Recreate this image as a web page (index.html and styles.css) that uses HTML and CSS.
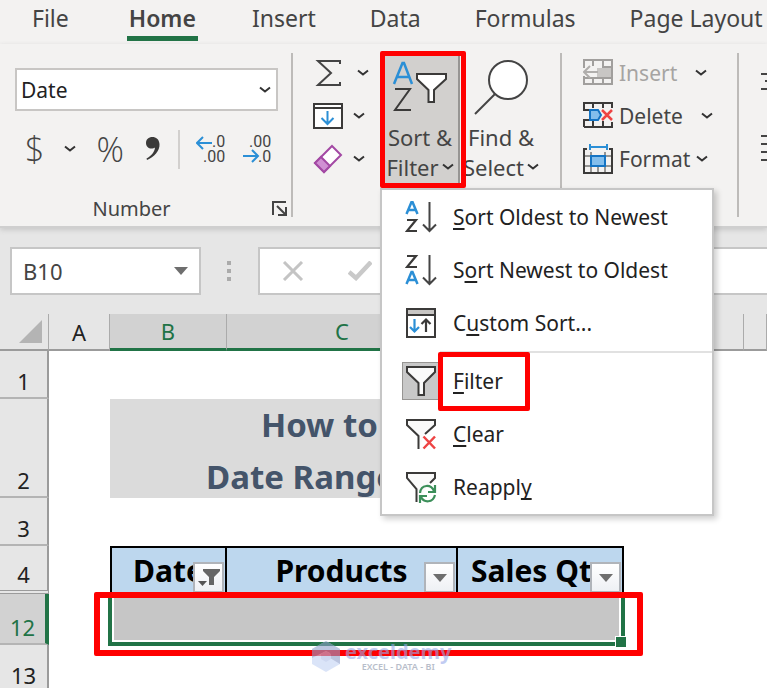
FILE: index.html
```html
<!DOCTYPE html>
<html lang="en">

<head>
    <meta charset="UTF-8">
    <meta name="viewport" content="width=device-width, initial-scale=1.0">
    <title>Date Range Filter</title>
    <link rel="stylesheet" href="styles.css">
</head>

<body>
    <svg class="defs" aria-hidden="true">
        <symbol id="chevron" viewBox="0 0 12 8">
            <path d="M1 1.5 L6 5.5 L11 1.5" fill="none" stroke="#333" stroke-width="2" />
        </symbol>
        <symbol id="caret" viewBox="0 0 14 8">
            <path d="M0 0 H14 L7 8 Z" fill="#6e6e6e" />
        </symbol>
    </svg>

    <nav class="tabs">
        <a href="#" class="file">File</a>
        <a href="#" class="active">Home</a>
        <a href="#">Insert</a>
        <a href="#">Data</a>
        <a href="#">Formulas</a>
        <a href="#">Page Layout</a>
    </nav>

    <div class="ribbon">
        <section class="group number">
            <div class="format-box">
                <select aria-label="Number format">
                    <option>Date</option>
                </select>
                <svg class="chevron"><use href="#chevron" /></svg>
            </div>
            <div class="number-tools">
                <div class="number-style">
                    <button class="currency" aria-label="Currency">$</button>
                    <button aria-label="More currencies"><svg class="chevron"><use href="#chevron" /></svg></button>
                    <button class="percent" aria-label="Percent">%</button>
                    <button aria-label="Comma style">
                        <svg width="18" height="26" viewBox="0 0 18 26">
                            <path d="M3 24 C10 21 16 15 15.500 8 C15 3 12 1 8.500 1 C4.500 1 2 3.500 2 7 C2 10.500 4.500 12.500 7.500 12.500 C9 12.500 10 12.200 11 11.500 C10.500 16 7.500 20 2.500 22.500 Z" fill="#3b3a39" />
                        </svg>
                    </button>
                </div>
                <span class="divider"></span>
                <button aria-label="Increase decimal">
                    <svg width="30" height="32" viewBox="0 0 30 32">
                        <path d="M1 10 H16 M7 4 L1 10 L7 16" fill="none" stroke="#2b8fd6" stroke-width="2" />
                        <text x="16" y="14" class="digits">.0</text>
                        <text x="7" y="29" class="digits">.00</text>
                    </svg>
                </button>
                <button aria-label="Decrease decimal">
                    <svg width="30" height="32" viewBox="0 0 30 32">
                        <path d="M1 23 H16 M10 17 L16 23 L10 29" fill="none" stroke="#2b8fd6" stroke-width="2" />
                        <text x="7" y="14" class="digits">.00</text>
                        <text x="16" y="29" class="digits">.0</text>
                    </svg>
                </button>
            </div>
            <footer class="group-name">
                <span>Number</span>
                <button aria-label="Number settings">
                    <svg width="16" height="16" viewBox="0 0 16 16">
                        <path d="M1 14 V1 H14 M5 5 L13 13 M14 6 V14 H6" fill="none" stroke="#444" stroke-width="2" />
                    </svg>
                </button>
            </footer>
        </section>

        <section class="group editing">
            <div class="edit-tools">
                <button aria-label="AutoSum">
                    <svg width="30" height="28" viewBox="0 0 30 28">
                        <path d="M27 5 V2 H5 L18 14 L5 26 H27 V23" fill="none" stroke="#444" stroke-width="2" />
                    </svg>
                    <svg class="chevron sum-chevron"><use href="#chevron" /></svg>
                </button>
                <button aria-label="Fill">
                    <svg width="30" height="28" viewBox="0 0 30 28">
                        <path d="M1 2 H29 V26 H1 Z" fill="#fff" stroke="#3b3a39" stroke-width="2" />
                        <path d="M1 6 H29" stroke="#3b3a39" stroke-width="2" />
                        <path d="M14.500 9 V22 M8.500 16 L14.500 22 L20.500 16" fill="none" stroke="#2b8fd6" stroke-width="2" />
                    </svg>
                    <svg class="chevron"><use href="#chevron" /></svg>
                </button>
                <button aria-label="Clear contents">
                    <svg width="30" height="30" viewBox="0 0 30 30">
                        <path d="M19 2 L28 11 L11 28 L2 19 Z" fill="#fff" stroke="#a349a4" stroke-width="2" />
                        <path d="M8 13 L17 22 L11 28 L2 19 Z" fill="#d090d3" stroke="#a349a4" stroke-width="2" />
                    </svg>
                    <svg class="chevron"><use href="#chevron" /></svg>
                </button>
            </div>

            <div class="dropdown">
                <button class="big-button open">
                    <svg width="56" height="62" viewBox="0 0 56 62">
                        <path d="M2 24 L10.500 3 L12 3 L20 24 M5 17 H17" fill="none" stroke="#2b8fd6" stroke-width="2.500" />
                        <path d="M3 29 H18 L3 50 H19" fill="none" stroke="#3b3a39" stroke-width="2" />
                        <path d="M25 14 H54 V19 L42 30 V42 H36.500 V30 L25 19 Z" fill="#fff" stroke="#3b3a39" stroke-width="2" />
                    </svg>
                    <span>Sort &amp;</span>
                    <span>Filter <svg class="chevron"><use href="#chevron" /></svg></span>
                </button>

                <div class="menu" role="menu">
                    <button role="menuitem">
                        <span class="menu-icon">
                            <svg width="32" height="32" viewBox="0 0 32 32">
                                <path d="M1.500 13 L6.500 1 H7.500 L12.500 13 M3.500 9 H10.500" fill="none" stroke="#2b8fd6" stroke-width="2.500" />
                                <path d="M2 19 H11 L2 30 H12" fill="none" stroke="#3b3a39" stroke-width="2.200" />
                                <path d="M24.500 1 V30 M18 23.500 L24.500 30 L31 23.500" fill="none" stroke="#444" stroke-width="2" />
                            </svg>
                        </span>
                        <span><u>S</u>ort Oldest to Newest</span>
                    </button>
                    <button role="menuitem">
                        <span class="menu-icon">
                            <svg width="32" height="32" viewBox="0 0 32 32">
                                <path d="M2 2 H11 L2 13 H12" fill="none" stroke="#3b3a39" stroke-width="2.200" />
                                <path d="M1.500 30 L6.500 18 H7.500 L12.500 30 M3.500 26 H10.500" fill="none" stroke="#2b8fd6" stroke-width="2.500" />
                                <path d="M24.500 1 V30 M18 23.500 L24.500 30 L31 23.500" fill="none" stroke="#444" stroke-width="2" />
                            </svg>
                        </span>
                        <span>S<u>o</u>rt Newest to Oldest</span>
                    </button>
                    <button role="menuitem">
                        <span class="menu-icon">
                            <svg width="32" height="32" viewBox="0 0 32 32">
                                <path d="M2 2 H30 V30 H2 Z" fill="#fff" stroke="#3b3a39" stroke-width="2" />
                                <path d="M3 3 H29 V7 H3 Z" fill="#c8c6c4" />
                                <path d="M2 8 H30" stroke="#3b3a39" stroke-width="2" />
                                <path d="M9.500 12 V24 M5 20 L9.500 24.500 L14 20" fill="none" stroke="#2b8fd6" stroke-width="2.200" />
                                <path d="M21 25 V13 M16.500 17 L21 12.500 L25.500 17" fill="none" stroke="#3b3a39" stroke-width="2.200" />
                            </svg>
                        </span>
                        <span>C<u>u</u>stom Sort...</span>
                    </button>
                    <hr>
                    <button role="menuitem">
                        <span class="menu-icon checked">
                            <svg width="32" height="32" viewBox="0 0 32 32">
                                <path d="M2 2 H30 V7 L19 18 V30 H13.500 V18 L2 7 Z" fill="#fafafa" stroke="#3b3a39" stroke-width="2" />
                            </svg>
                        </span>
                        <span class="marked"><u>F</u>ilter</span>
                    </button>
                    <button role="menuitem">
                        <span class="menu-icon">
                            <svg width="32" height="32" viewBox="0 0 32 32">
                                <path d="M13.500 31 V18 L2 7 V2 H30 V7 L20 16" fill="#fafafa" stroke="#3b3a39" stroke-width="2" />
                                <path d="M18.500 18.500 L30 30.500 M30 18.500 L18.500 30.500" stroke="#ee4444" stroke-width="2.500" />
                            </svg>
                        </span>
                        <span><u>C</u>lear</span>
                    </button>
                    <button role="menuitem">
                        <span class="menu-icon">
                            <svg width="32" height="32" viewBox="0 0 32 32">
                                <path d="M11.500 31 V18 L2 7 V2 H30 V7 L25 12" fill="#fafafa" stroke="#3b3a39" stroke-width="2" />
                                <path d="M15 22 C16 13 26 13 29 20 M30 14 V21 H23 M30 24 C28 32 19 32 16 26 M15 32 V25 H22" fill="none" stroke="#3c8f5a" stroke-width="2.200" />
                            </svg>
                        </span>
                        <span>Reappl<u>y</u></span>
                    </button>
                </div>
            </div>

            <button class="big-button find">
                <svg width="56" height="62" viewBox="0 0 56 62">
                    <circle cx="35" cy="20" r="19" fill="#fff" stroke="#444" stroke-width="2" />
                    <path d="M22 34 L2 54" stroke="#444" stroke-width="2" />
                </svg>
                <span>Find &amp;</span>
                <span>Select <svg class="chevron"><use href="#chevron" /></svg></span>
            </button>
        </section>

        <section class="group cells">
            <button class="disabled">
                <svg width="30" height="30" viewBox="0 0 30 30">
                    <path d="M1 10 V2 H29 V26 H1 V18 M10 2 V8 M20 2 V26 M10 20 V26 M20 9 H29 M1 20 H29" fill="none" stroke="#a19f9d" stroke-width="2" />
                    <path d="M14 10 H28 V19 H14 Z" fill="#c8c6c4" />
                    <path d="M1 14 H15 M7 8 L1 14 L7 20" fill="none" stroke="#b0aeac" stroke-width="2" />
                </svg>
                <span>Insert</span>
                <svg class="chevron"><use href="#chevron" /></svg>
            </button>
            <button>
                <svg width="30" height="30" viewBox="0 0 30 30">
                    <path d="M29 7 V2 H1 V9 H7 M10 2 V7 M20 2 V7 M1 26 V19 H7 M1 26 H29 V21 M10 20 V26 M20 20 V26" fill="none" stroke="#3b3a39" stroke-width="2" />
                    <path d="M7 9 H15 L18 14 L15 19 H7 Z" fill="#83beec" stroke="#1474c4" stroke-width="2" />
                    <path d="M19 9 L29 19 M29 9 L19 19" stroke="#ee4444" stroke-width="2.500" />
                </svg>
                <span>Delete</span>
                <svg class="chevron"><use href="#chevron" /></svg>
            </button>
            <button class="format">
                <svg width="30" height="30" viewBox="0 0 30 30">
                    <path d="M4 5 H1 V29 H29 V5 H26" fill="none" stroke="#3b3a39" stroke-width="2" />
                    <path d="M8 8 V29 M22 8 V29 M15 23 V29 M2 12 H28 M2 22 H28" fill="none" stroke="#3b3a39" stroke-width="1" />
                    <path d="M8 12 H22 V22 H8 Z" fill="#83beec" stroke="#1474c4" stroke-width="2" />
                    <path d="M7 3 H24 M7 0 V6 M24 0 V6" stroke="#2b8fd6" stroke-width="2" />
                </svg>
                <span>Format</span>
                <svg class="chevron"><use href="#chevron" /></svg>
            </button>
        </section>

        <section class="group align">
            <button aria-label="Wrap">
                <svg width="20" height="30" viewBox="0 0 20 30"><path d="M0 7 H20 M4 14 H20 M0 22 H20" stroke="#444" stroke-width="2" /></svg>
            </button>
            <button aria-label="Align">
                <svg width="20" height="30" viewBox="0 0 20 30"><path d="M0 3 H20 M0 11 H20 M0 19 H20 M0 27 H20" stroke="#444" stroke-width="2" /></svg>
            </button>
        </section>
    </div>

    <div class="formula-bar">
        <div class="name-box">
            <input type="text" value="B10" aria-label="Name box">
            <svg width="14" height="8"><use href="#caret" /></svg>
        </div>
        <svg class="dots" width="4" height="20" viewBox="0 0 4 20">
            <path d="M0 0 H4 V4 H0 Z M0 8 H4 V12 H0 Z M0 16 H4 V20 H0 Z" fill="#ababab" />
        </svg>
        <div class="entry">
            <button aria-label="Cancel">
                <svg width="22" height="20" viewBox="0 0 22 20"><path d="M2 1 L20 19 M20 1 L2 19" stroke="#c4c4c4" stroke-width="3" /></svg>
            </button>
            <button aria-label="Enter">
                <svg width="24" height="20" viewBox="0 0 24 20"><path d="M1 11 L8 17 L23 1" fill="none" stroke="#c9c9c9" stroke-width="4.500" /></svg>
            </button>
            <input type="text" aria-label="Formula">
        </div>
    </div>

    <main class="sheet">
        <table>
            <colgroup>
                <col class="col-index">
                <col class="col-a">
                <col class="col-b">
                <col class="col-c">
                <col class="col-d">
                <col class="col-e">
                <col>
            </colgroup>
            <thead>
                <tr>
                    <th class="corner"><svg width="23" height="23" viewBox="0 0 23 23"><path d="M23 0 V23 H0 Z" fill="#b4b4b4" /></svg></th>
                    <th>A</th>
                    <th class="selected">B</th>
                    <th class="selected">C</th>
                    <th class="selected">D</th>
                    <th>E</th>
                    <th></th>
                </tr>
            </thead>
            <tbody>
                <tr class="row">
                    <th>1</th>
                    <td colspan="6"></td>
                </tr>
                <tr class="row-title">
                    <th>2</th>
                    <td></td>
                    <td colspan="3" class="title"><div>How to Filter<br>Date Range in Excel</div></td>
                    <td colspan="2"></td>
                </tr>
                <tr class="row">
                    <th>3</th>
                    <td colspan="6"></td>
                </tr>
                <tr class="row">
                    <th class="hidden-below">4</th>
                    <td></td>
                    <td class="field first">Date
                        <button aria-label="Date filter">
                            <svg width="24" height="20" viewBox="0 0 24 20">
                                <path d="M6 1 H23 V3 L17 9 V17 H12 V9 L6 3 Z" fill="#666" />
                                <path d="M1 13 H10 L5.500 18 Z" fill="#555" />
                            </svg>
                        </button>
                    </td>
                    <td class="field">Products
                        <button aria-label="Products filter"><svg width="14" height="8"><use href="#caret" /></svg></button>
                    </td>
                    <td class="field">Sales Qty
                        <button aria-label="Sales Qty filter"><svg width="14" height="8"><use href="#caret" /></svg></button>
                    </td>
                    <td colspan="2"></td>
                </tr>
                <tr class="row-selected">
                    <th class="selected">12</th>
                    <td></td>
                    <td colspan="3" class="range"><div class="selection"></div></td>
                    <td colspan="2"></td>
                </tr>
                <tr class="row">
                    <th>13</th>
                    <td colspan="6"></td>
                </tr>
            </tbody>
        </table>

        <div class="watermark">
            <svg width="28" height="31" viewBox="0 0 28 31">
                <path d="M14 0 L28 8 V23 L14 31 L0 23 V8 Z" fill="#c3d3f5" />
                <path d="M14 0 L28 8 V23 L18 17 V12 L14 10 L0 17 V8 Z" fill="#8f9fcb" />
                <path d="M14 10 L19 13 V18 L14 21 L9 18 V13 Z" fill="#aebfe9" />
            </svg>
            <div>
                <strong>exceldemy</strong>
                <small>EXCEL - DATA - BI</small>
            </div>
        </div>
    </main>
</body>

</html>
```
FILE: styles.css
```css
*,
*::before,
*::after {
    box-sizing: border-box;
}

body {
    margin: 0;
    height: 100vh;
    display: flex;
    flex-direction: column;
    overflow: hidden;
    font-family: "Noto Sans", "Open Sans", sans-serif;
    font-size: 21px;
    color: #444;
    background-color: #e6e6e6;
}

button,
input,
select {
    font: inherit;
    color: inherit;
    border: none;
    background: none;
    padding: 0;
    margin: 0;
}

svg {
    display: block;
    flex: none;
}

.defs {
    position: absolute;
    width: 0;
    height: 0;
}

.chevron {
    width: 12px;
    height: 8px;
}

/* tabs */
.tabs {
    display: flex;
    gap: 54px;
    height: 44px;
    padding-left: 32px;
    background-color: #f3f2f1;
    white-space: nowrap;
}

.tabs a {
    height: 41px;
    line-height: 36px;
    font-size: 23px;
    color: #444;
    text-decoration: none;
}

.tabs .file {
    margin-right: 4px;
}

.tabs .active {
    padding: 0 2px;
    font-weight: 600;
    border-bottom: 5px solid #217346;
}

/* ribbon */
.ribbon {
    position: relative;
    z-index: 2;
    display: flex;
    flex: none;
    height: 184px;
    padding: 9px 0;
    background-color: #f3f2f1;
    border-bottom: 2px solid #cfcfcf;
    box-shadow: 0 2px 5px #c8c8c8;
}

.group {
    display: flex;
    flex: none;
    border-right: 2px solid #bdbbb9;
}

.number {
    flex-direction: column;
    width: 293px;
    padding: 15px 3px 0 15px;
}

.format-box {
    display: flex;
    align-items: center;
    height: 43px;
    margin-right: 10px;
    padding-right: 5px;
    background-color: #fff;
    border: 2px solid #c8c6c4;
}

.format-box select {
    flex: 1;
    height: 38px;
    padding-left: 4px;
    appearance: none;
    color: #222;
}

.number-tools {
    display: flex;
    align-items: center;
    height: 76px;
    gap: 16px;
    padding-left: 10px;
}

.number-style {
    display: flex;
    align-items: center;
    gap: 20px;
}

.currency,
.percent {
    font-family: "Open Sans", sans-serif;
    font-size: 34px;
    font-weight: 300;
    line-height: 34px;
}

.divider {
    width: 2px;
    height: 39px;
    background-color: #d2d0ce;
}

.digits {
    font-family: Roboto, sans-serif;
    font-size: 16px;
    fill: #444;
}

.group-name {
    display: flex;
    align-items: center;
    margin-top: auto;
    line-height: 16px;
    font-size: 20px;
}

.group-name span {
    flex: 1;
    padding-right: 24px;
    text-align: center;
}

.editing {
    width: 269px;
    padding-left: 20px;
}

.edit-tools {
    width: 69px;
    margin-top: -2px;
}

.edit-tools button {
    display: flex;
    align-items: center;
    gap: 10px;
    height: 43px;
}

.edit-tools .sum-chevron {
    margin-left: 4px;
}

.big-button {
    display: flex;
    flex-direction: column;
    align-items: center;
    width: 78px;
    height: 134px;
    padding-top: 7px;
    font-size: 22px;
    line-height: 30px;
    white-space: nowrap;
}

.big-button span {
    display: flex;
    align-items: center;
    gap: 3px;
}

.find {
    width: 82px;
}

.open {
    background-color: #d2d0ce;
    border-right: 2px solid #979593;
}

.dropdown {
    position: relative;
}

.dropdown::after {
    content: "";
    position: absolute;
    top: -2px;
    left: -2px;
    width: 86px;
    height: 137px;
    border: 5px solid #f00;
    border-radius: 2px;
    z-index: 2;
    pointer-events: none;
}

.menu {
    position: absolute;
    top: 135px;
    left: -2px;
    width: 334px;
    padding-bottom: 1px;
    background-color: #fff;
    border: 2px solid #c6c6c6;
    box-shadow: 3px 3px 6px rgba(0, 0, 0, 0.2);
    font-size: 21px;
    color: #222;
}

.menu button {
    display: flex;
    align-items: center;
    gap: 13px;
    width: 100%;
    height: 53px;
    padding-left: 20px;
    text-align: left;
}

.menu u {
    text-underline-offset: 3px;
    text-decoration-thickness: 2px;
    text-decoration-skip-ink: none;
}

.menu hr {
    margin: 2px 0 1px 58px;
    border: none;
    border-top: 2px solid #e1e1e1;
}

.menu-icon {
    padding: 2px;
    border: 1px solid transparent;
}

.checked {
    background-color: #c8c8c8;
    border-color: #979593;
}

.marked {
    position: relative;
}

.marked::after {
    content: "";
    position: absolute;
    inset: -15px -27px -16px -15px;
    border: 5px solid #f00;
    border-radius: 2px;
}

.cells {
    flex-direction: column;
    width: 177px;
    margin-right: 0;
    padding-left: 21px;
}

.cells button {
    display: flex;
    align-items: center;
    gap: 6px;
    height: 43px;
    line-height: 30px;
}

.cells button:first-child {
    margin-top: -2px;
}

.cells .chevron {
    margin-left: 12px;
}

.cells .format .chevron {
    margin-left: 0;
}

.disabled span {
    color: #a6a4a2;
}

.align {
    flex: 1;
    flex-direction: column;
    gap: 36px;
    padding: 14px 0 0 22px;
    border: none;
    overflow: hidden;
}

/* formula bar */
.formula-bar {
    display: flex;
    flex: none;
    align-items: center;
    height: 86px;
    padding-left: 10px;
}

.name-box {
    display: flex;
    align-items: center;
    width: 191px;
    height: 48px;
    padding: 0 11px;
    background-color: #fff;
    border: 2px solid #c6c6c6;
}

.name-box input {
    flex: 1;
    min-width: 0;
    font-size: 22px;
}

.dots {
    margin: 0 27px 0 26px;
}

.entry {
    display: flex;
    flex: 1;
    align-items: center;
    gap: 44px;
    height: 48px;
    padding-left: 22px;
    background-color: #fff;
    border: 2px solid #c6c6c6;
    border-right: none;
}

.entry input {
    flex: 1;
    min-width: 0;
}

/* sheet */
.sheet {
    position: relative;
    flex: 1;
    overflow: hidden;
    background-color: #fff;
}

table {
    width: 100%;
    table-layout: fixed;
    border-spacing: 0;
}

.col-index {
    width: 49px;
}

.col-a {
    width: 61px;
}

.col-b {
    width: 117px;
}

.col-c {
    width: 231px;
}

.col-d {
    width: 166px;
}

.col-e {
    width: 120px;
}

th,
td {
    padding: 0;
}

th {
    font-size: 22px;
    font-weight: 400;
    color: #222;
    background-color: #e6e6e6;
}

thead th {
    height: 37px;
    line-height: 32px;
    border-right: 1px solid #ababab;
    border-bottom: 2px solid #9b9b9b;
}

thead .selected {
    color: #217346;
    background-color: #d2d2d2;
    border-bottom: 3px solid #217346;
}

.corner svg {
    margin-left: 19px;
}

tbody th {
    vertical-align: bottom;
    line-height: 32px;
    border-right: 2px solid #9b9b9b;
    border-bottom: 2px solid #b4b4b4;
}

.row {
    height: 48px;
}

.row-title {
    height: 99px;
}

.row-selected {
    height: 51px;
}

tbody .selected {
    color: #217346;
    background-color: #d2d2d2;
    border-right: 4px solid #217346;
}

.hidden-below {
    border-bottom: 4px double #9b9b9b;
}

.title {
    font-size: 33px;
    font-weight: 700;
    line-height: 52px;
    text-align: center;
    vertical-align: top;
    white-space: nowrap;
    color: #44546a;
    background-color: #dbdbdb;
}

.title div {
    height: 98px;
}

.field {
    position: relative;
    font-size: 30px;
    font-weight: 700;
    line-height: 44px;
    text-align: center;
    white-space: nowrap;
    color: #000;
    background-color: #bdd7ee;
    border-top: 2px solid #000;
    border-right: 2px solid #000;
}

.first {
    border-left: 2px solid #000;
}

.field button {
    position: absolute;
    right: 1px;
    bottom: 1px;
    display: flex;
    align-items: center;
    justify-content: center;
    width: 31px;
    height: 31px;
    background: linear-gradient(#fff, #eef0f4);
    border: 2px solid #b0b4ba;
}

.range {
    position: relative;
    background-color: #c6c6c6;
}

.selection {
    position: absolute;
    inset: 0 -1px -1px -2px;
    border: 4px solid #217346;
    border-top: none;
    box-shadow: inset 0 0 0 2px #fff;
}

.selection::before {
    content: "";
    position: absolute;
    right: -6px;
    bottom: -6px;
    width: 12px;
    height: 12px;
    background-color: #217346;
    border: 1px solid #fff;
}

.range::after {
    content: "";
    position: absolute;
    inset: -2px -19px -11px -16px;
    border: 6px solid #f00;
    border-radius: 2px;
}

/* watermark */
.watermark {
    position: absolute;
    top: 327px;
    left: 312px;
    display: flex;
    gap: 5px;
    opacity: 0.6;
    color: #98a9ea;
}

.watermark strong,
.watermark small {
    display: block;
}

.watermark strong {
    font-size: 20px;
    line-height: 22px;
}

.watermark small {
    font-size: 9px;
    font-weight: 600;
    line-height: 8px;
    text-align: center;
    color: #8a94a8;
}
```
